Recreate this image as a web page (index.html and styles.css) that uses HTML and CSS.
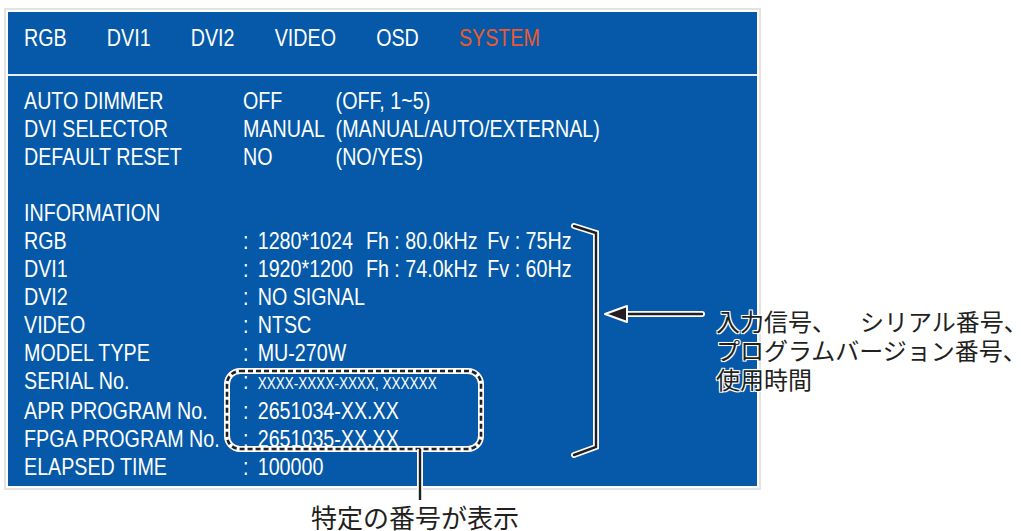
FILE: index.html
```html
<!DOCTYPE html>
<html lang="ja">
<head>
  <meta charset="UTF-8" />
  <title>SYSTEM menu</title>
  <link rel="stylesheet" href="styles.css">
</head>
<body>

<div class="figure">
  <div class="frame">
    <div class="screen">
      <nav class="tabs">
        <div class="condensed tab-row">
          <span class="tab">RGB</span>
          <span class="tab">DVI1</span>
          <span class="tab">DVI2</span>
          <span class="tab">VIDEO</span>
          <span class="tab">OSD</span>
          <span class="tab active">SYSTEM</span>
        </div>
      </nav>

      <div class="content">
        <div class="condensed">
          <div class="settings">
            <span>AUTO DIMMER</span><span>OFF</span><span>(OFF, 1~5)</span>
            <span>DVI SELECTOR</span><span>MANUAL</span><span>(MANUAL/AUTO/EXTERNAL)</span>
            <span>DEFAULT RESET</span><span>NO</span><span>(NO/YES)</span>
          </div>

          <div class="info-title">INFORMATION</div>
          <div class="info">
            <span>RGB</span><span>:</span><span><span class="res">1280*1024</span><span class="fh">Fh : 80.0kHz</span>Fv : 75Hz</span>
            <span>DVI1</span><span>:</span><span><span class="res">1920*1200</span><span class="fh">Fh : 74.0kHz</span>Fv : 60Hz</span>
            <span>DVI2</span><span>:</span><span>NO SIGNAL</span>
            <span>VIDEO</span><span>:</span><span>NTSC</span>
            <span>MODEL TYPE</span><span>:</span><span>MU-270W</span>
            <span>SERIAL No.</span><span>:</span><span><span class="small">XXXX-XXXX-XXXX, XXXXXX</span></span>
            <span>APR PROGRAM No.</span><span>:</span><span>2651034-XX.XX</span>
            <span>FPGA PROGRAM No.</span><span>:</span><span>2651035-XX.XX</span>
            <span>ELAPSED TIME</span><span>:</span><span>100000</span>
          </div>
        </div>
      </div>
    </div>
  </div>

  <!-- annotation marks drawn over the screen -->
  <svg class="marks" width="1021" height="531" viewBox="0 0 1021 531">
    <g fill="none" stroke-linejoin="miter" stroke-linecap="round">
      <!-- bracket -->
      <polyline points="574,226 596,233 596,447 574,455" stroke="#fff" stroke-width="6" />
      <polyline points="574,226 596,233 596,447 574,455" stroke="#231f20" stroke-width="2.4" />
      <!-- arrow shaft -->
      <line x1="620" y1="314" x2="702" y2="314" stroke="#fff" stroke-width="6" />
      <line x1="620" y1="314" x2="702" y2="314" stroke="#231f20" stroke-width="2.4" />
      <!-- dashed box -->
      <rect x="227" y="371" width="254" height="78" rx="13" stroke="#fff" stroke-width="6" />
      <rect x="227" y="371" width="254" height="78" rx="13" stroke="#231f20" stroke-width="2.6" stroke-dasharray="5 3" stroke-linecap="butt" />
      <!-- leader to caption -->
      <line x1="420" y1="449" x2="420" y2="500" stroke="#fff" stroke-width="6" stroke-linecap="butt" />
      <line x1="420" y1="449" x2="420" y2="500" stroke="#231f20" stroke-width="2.4" stroke-linecap="butt" />
    </g>
    <polygon points="605,314 627,306 627,322" fill="#231f20" stroke="#fff" stroke-width="2" stroke-linejoin="round" />
  </svg>

  <p class="callout">入力信号、　シリアル番号、<br>プログラムバージョン番号、<br>使用時間</p>
  <p class="caption">特定の番号が表示</p>
</div>

</body>
</html>
```

FILE: styles.css
```css
body {
  margin: 0;
  background: #fff;
  font-family: "Liberation Sans", Arial, sans-serif;
}

.figure {
  position: relative;
  width: 1021px;
  height: 531px;
  overflow: hidden;
}

.frame {
  position: absolute;
  left: 4px;
  top: 8px;
  border: 2px solid #e3e3e3;
  padding: 2px;
  background: #fff;
}

.screen {
  width: 749px;
  height: 474px;
  background: #0559a8;
  color: #fff;
  display: flex;
  flex-direction: column;
  font-size: 24px;
  line-height: 28px;
  overflow: hidden;
}

/* the menu font is a condensed grotesk: squeeze Liberation Sans */
.condensed {
  transform: scaleX(0.82);
  transform-origin: 0 50%;
  white-space: nowrap;
}

.tabs {
  flex-shrink: 0;
  height: 64px;
  box-sizing: border-box;
  padding: 12px 16px 0;
  border-bottom: 2px solid #e6ecf3;
}

.tab-row {
  display: flex;
  gap: 49px;
}

.tab.active {
  color: #ec5a2b;
}

.content {
  flex: 1;
  padding: 11px 16px 0;
}

.settings {
  display: grid;
  grid-template-columns: 267px 113px auto;
}

.info-title {
  margin-top: 28px;
}

.info {
  display: grid;
  grid-template-columns: 267px 18px auto;
}

.res {
  display: inline-block;
  width: 132px;
}

.fh {
  display: inline-block;
  width: 148px;
}

.small {
  font-size: 16.5px;
}

.marks {
  position: absolute;
  left: 0;
  top: 0;
}

.callout,
.caption {
  position: absolute;
  margin: 0;
  font-family: "Noto Sans CJK JP", "Noto Sans", sans-serif;
  font-size: 24px;
  line-height: 29px;
  color: #231f20;
  white-space: nowrap;
  text-spacing-trim: space-all;
  text-shadow: 0 0 2px #fff, 1px 1px 0 #fff, -1px -1px 0 #fff, 1px -1px 0 #fff, -1px 1px 0 #fff;
}

.callout {
  left: 716px;
  top: 306px;
}

.caption {
  left: 311px;
  top: 502px;
  font-size: 26px;
  line-height: 29px;
}
```
